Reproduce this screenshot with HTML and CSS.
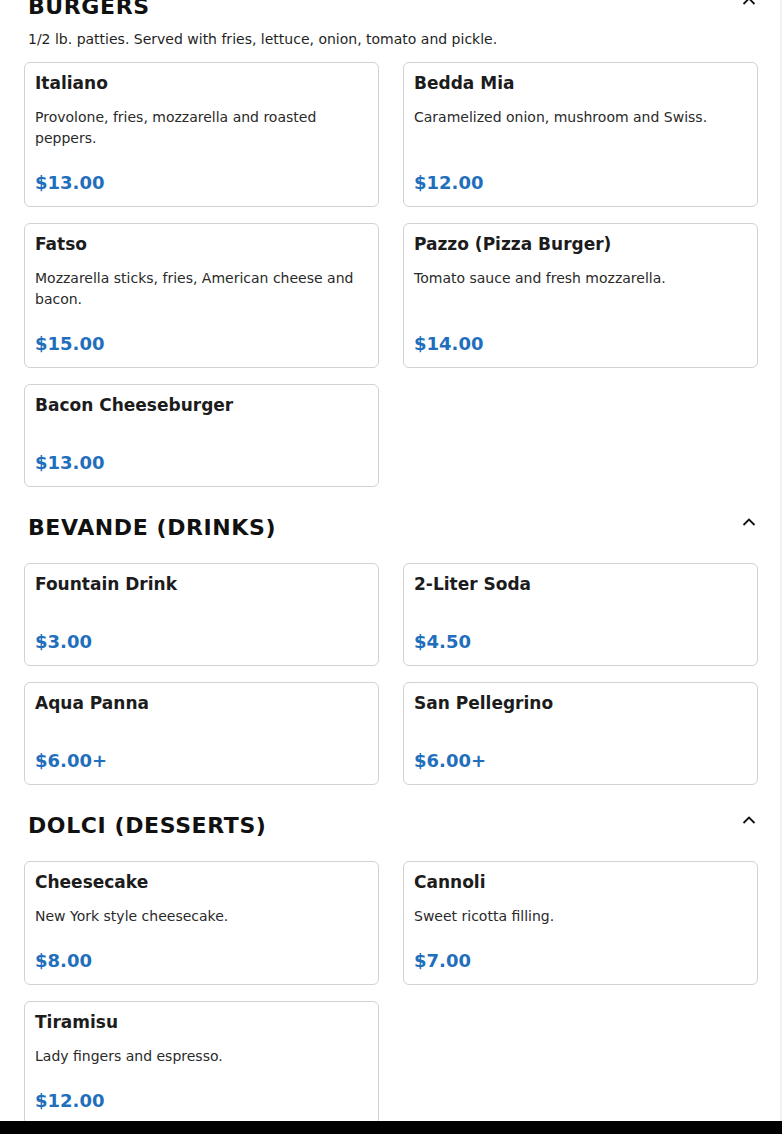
FILE: index.html
```html
<!DOCTYPE html>
<html lang="en">
<head>
<meta charset="utf-8">
<title>Menu</title>
<link rel="stylesheet" href="styles.css">
</head>
<body>
<div class="viewport">
  <main class="menu">
    <section class="section">
      <div class="section-top has-desc">
        <div class="section-head">
          <h2 class="section-title">BURGERS</h2>
          <svg class="chev" width="16" height="16" viewBox="0 0 16 16"><polyline points="2.5,11 8,5.5 13.5,11" fill="none" stroke="#111" stroke-width="1.8"/></svg>
        </div>
        <p class="section-desc">1/2 lb. patties. Served with fries, lettuce, onion, tomato and pickle.</p>
      </div>
      <div class="grid">
        <article class="card"><h3 class="name">Italiano</h3><p class="desc">Provolone, fries, mozzarella and roasted peppers.</p><div class="price">$13.00</div></article>
        <article class="card"><h3 class="name">Bedda Mia</h3><p class="desc">Caramelized onion, mushroom and Swiss.</p><div class="price">$12.00</div></article>
        <article class="card"><h3 class="name">Fatso</h3><p class="desc">Mozzarella sticks, fries, American cheese and bacon.</p><div class="price">$15.00</div></article>
        <article class="card"><h3 class="name">Pazzo (Pizza Burger)</h3><p class="desc">Tomato sauce and fresh mozzarella.</p><div class="price">$14.00</div></article>
        <article class="card"><h3 class="name">Bacon Cheeseburger</h3><p class="desc"></p><div class="price">$13.00</div></article>
      </div>
    </section>

    <section class="section">
      <div class="section-top">
        <div class="section-head">
          <h2 class="section-title">BEVANDE (DRINKS)</h2>
          <svg class="chev" width="16" height="16" viewBox="0 0 16 16"><polyline points="2.5,11 8,5.5 13.5,11" fill="none" stroke="#111" stroke-width="1.8"/></svg>
        </div>
      </div>
      <div class="grid">
        <article class="card"><h3 class="name">Fountain Drink</h3><p class="desc"></p><div class="price">$3.00</div></article>
        <article class="card"><h3 class="name">2-Liter Soda</h3><p class="desc"></p><div class="price">$4.50</div></article>
        <article class="card"><h3 class="name">Aqua Panna</h3><p class="desc"></p><div class="price">$6.00+</div></article>
        <article class="card"><h3 class="name">San Pellegrino</h3><p class="desc"></p><div class="price">$6.00+</div></article>
      </div>
    </section>

    <section class="section">
      <div class="section-top">
        <div class="section-head">
          <h2 class="section-title">DOLCI (DESSERTS)</h2>
          <svg class="chev" width="16" height="16" viewBox="0 0 16 16"><polyline points="2.5,11 8,5.5 13.5,11" fill="none" stroke="#111" stroke-width="1.8"/></svg>
        </div>
      </div>
      <div class="grid">
        <article class="card"><h3 class="name">Cheesecake</h3><p class="desc">New York style cheesecake.</p><div class="price">$8.00</div></article>
        <article class="card"><h3 class="name">Cannoli</h3><p class="desc">Sweet ricotta filling.</p><div class="price">$7.00</div></article>
        <article class="card"><h3 class="name">Tiramisu</h3><p class="desc">Lady fingers and espresso.</p><div class="price">$12.00</div></article>
      </div>
    </section>
  </main>
</div>
<div class="bottom-bar"></div>
</body>
</html>
```

FILE: styles.css
```css
html, body {
  margin: 0;
  padding: 0;
  background: #000;
}

body {
  font-family: "DejaVu Sans", Verdana, sans-serif;
  color: #1a1a1a;
  width: 782px;
  height: 1134px;
  overflow: hidden;
  display: flex;
  flex-direction: column;
}

.viewport {
  height: 1121px;
  flex: none;
  overflow: hidden;
  background: #fff;
  box-shadow: inset -2px 0 0 #f1f1f1;
}

.bottom-bar {
  flex: 1;
  background: #000;
}

.menu {
  margin-top: -7px;
  padding: 0 24px;
}

.section + .section {
  margin-top: 27px;
}

.section-top {
  display: flex;
  flex-direction: column;
  gap: 8px;
  margin-bottom: 21px;
}

.section-top.has-desc {
  margin-bottom: 12px;
}

.section-head {
  display: flex;
  justify-content: space-between;
  align-items: flex-start;
  padding: 0 1px 0 4px;
}

.section-title {
  margin: 0;
  font-size: 22px;
  line-height: 28px;
  font-weight: 700;
  letter-spacing: 0.6px;
  color: #111;
}

.chev {
  display: block;
  flex: none;
  margin-top: 0;
}

.section-desc {
  margin: 0;
  padding-left: 4px;
  font-size: 14px;
  line-height: 21px;
  color: #1f1f1f;
}

.grid {
  display: grid;
  grid-template-columns: 1fr 1fr;
  gap: 16px 24px;
}

.card {
  display: flex;
  flex-direction: column;
  border: 1px solid #d2d2d2;
  border-radius: 6px;
  padding: 10px 10px 12px;
  background: #fff;
}

.name {
  margin: 0 0 14px;
  font-size: 17px;
  line-height: 20.4px;
  font-weight: 700;
  color: #1c1c1c;
}

.desc {
  margin: 0 0 23px;
  font-size: 14px;
  line-height: 21px;
  color: #2a2a2a;
}

.price {
  margin-top: auto;
  font-size: 18px;
  line-height: 21.6px;
  font-weight: 700;
  color: #1f6fbd;
}
```
